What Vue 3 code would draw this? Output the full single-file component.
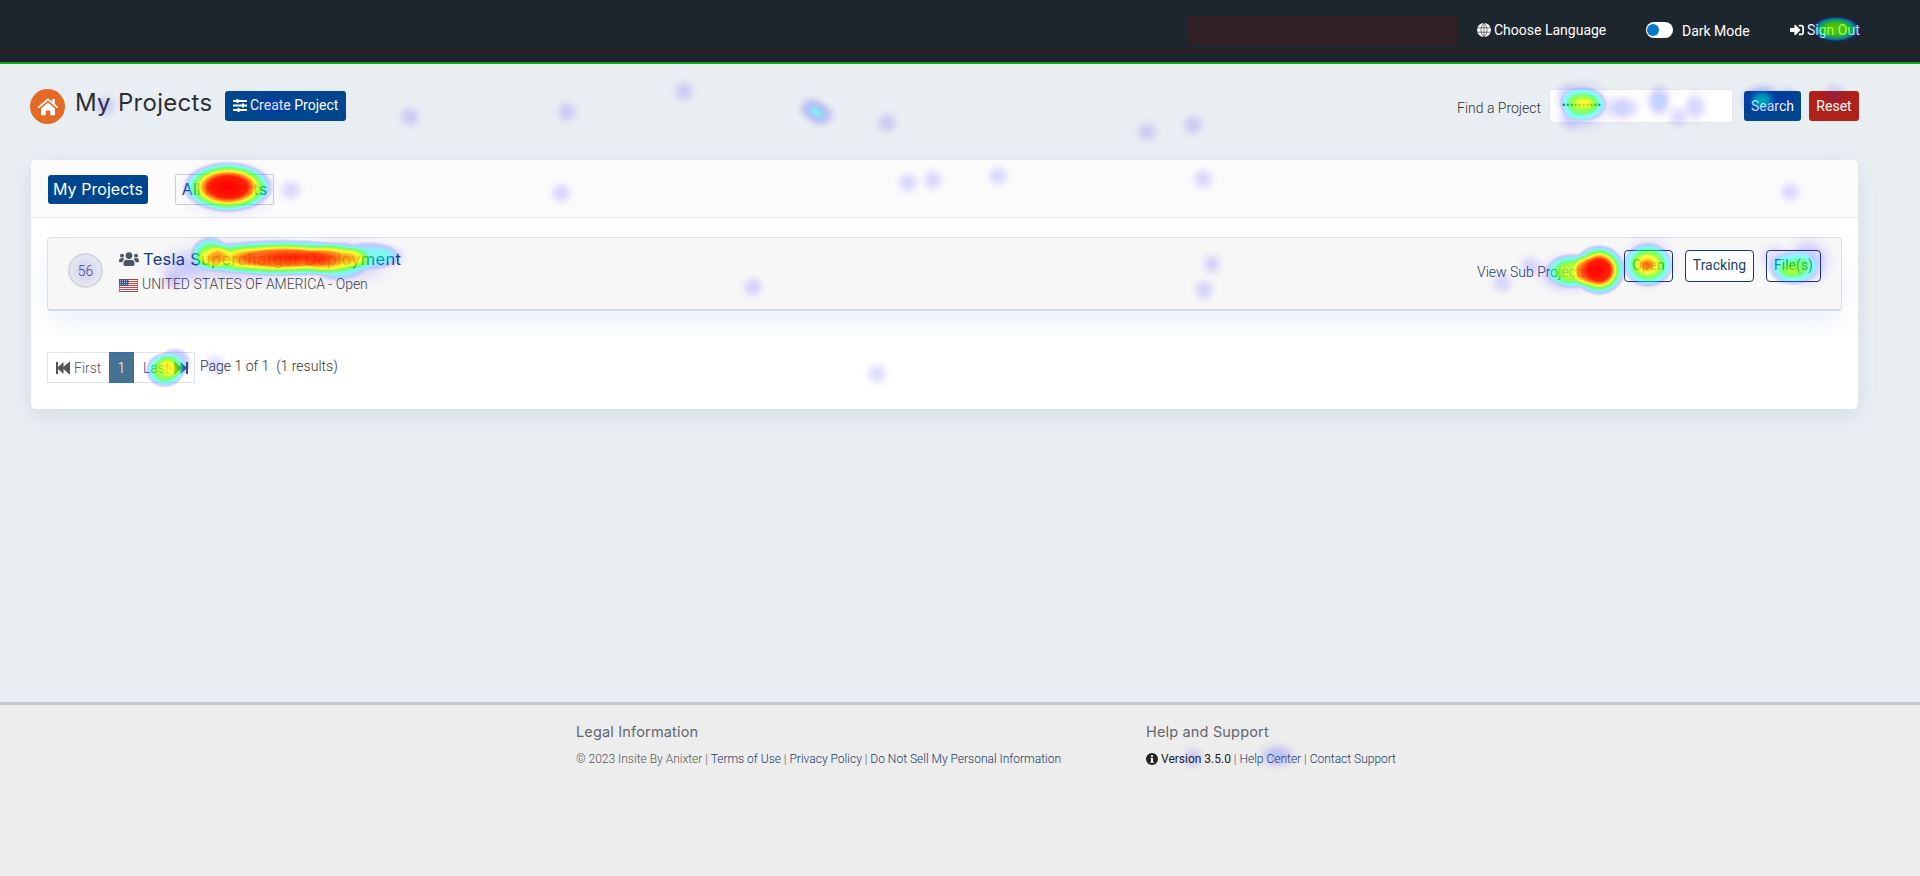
<script setup>
const spots = [
  [410, 117], [567, 112], [684, 91], [887, 123], [1147, 132], [1193, 125],
  [908, 183], [933, 180], [998, 176], [1203, 179], [1790, 192], [291, 190],
  [561, 193], [753, 287], [1212, 264], [1204, 290], [877, 374], [215, 365],
  [105, 106], [173, 280], [1502, 283], [1530, 266], [1193, 758],
  [1678, 117], [1787, 97], [1834, 94], [1567, 94], [1570, 119]
]
const soft = [
  [812, 109, 17, 15, 0.3], [821, 115, 17, 15, 0.3], [1622, 108, 24, 17, 0.22],
  [1659, 101, 16, 20, 0.3], [1695, 107, 16, 20, 0.18], [1762, 100, 24, 19, 0.52],
  [1277, 756, 23, 16, 0.25], [85, 271, 20, 20, 0.1], [273, 106, 24, 16, 0.18],
  [1808, 262, 28, 29, 0.3], [1775, 258, 20, 18, 0.15], [1568, 274, 38, 24, 0.3],
  [1648, 262, 32, 32, 0.2], [238, 262, 90, 30, 0.2], [345, 262, 60, 30, 0.2],
  [228, 190, 56, 34, 0.22], [1583, 106, 32, 30, 0.28], [185, 268, 34, 22, 0.14],
  [388, 256, 22, 14, 0.22]
]
const hot = [
  [228, 187, 46, 26, 1], [284, 258, 92, 19, 0.9], [210, 254, 20, 18, 0.64],
  [228, 258, 34, 17, 0.2], [338, 261, 34, 20, 0.5], [370, 256, 30, 15, 0.38],
  [1599, 270, 27, 26, 1], [1572, 271, 27, 18, 0.66], [1648, 265, 26, 23, 0.72],
  [1793, 268, 26, 18, 0.52], [165, 370, 20, 18, 0.74], [175, 363, 17, 16, 0.34],
  [1836, 29, 26, 14, 0.71], [1583, 104, 25, 18, 0.56]
]
const cores = [
  [1647, 265, 15, 12, 0.6], [1790, 271, 18, 12, 0.42], [1584, 103, 20, 11, 0.42], [294, 257, 54, 10, 0.7]
]
</script>

<template>
  <div class="page">
    <header class="top">
      <div class="nav">
        <span class="block"></span>
        <span class="lang">
          <svg class="globe" viewBox="0 0 16 16"><circle cx="8" cy="8" r="8" fill="#fff" /><path d="M0 5.500h16M0 10.500h16M8 0v16M8 0C3.400 4 3.400 12 8 16M8 0c4.600 4 4.600 12 0 16" fill="none" stroke="#1d262d" stroke-width=".7" /></svg>
          <span>Choose Language</span>
        </span>
        <span class="dark"><i class="switch"></i><span>Dark Mode</span></span>
        <span class="out">
          <svg viewBox="0 0 512 512"><path fill="#fff" d="M416 448h-84c-7 0-12-5-12-12v-40c0-7 5-12 12-12h84c18 0 32-14 32-32V160c0-18-14-32-32-32h-84c-7 0-12-5-12-12V76c0-7 5-12 12-12h84c53 0 96 43 96 96v192c0 53-43 96-96 96zm-47-209L201 71c-15-15-41-4-41 17v96H24c-13 0-24 11-24 24v96c0 13 11 24 24 24h136v96c0 21 26 32 41 17l168-168c9-9 9-25 0-34z" /></svg>
          <span>Sign Out</span>
        </span>
      </div>
      <div class="s1"></div><div class="s2"></div><div class="s3"></div>
    </header>

    <section class="titlebar">
      <span class="home"><svg viewBox="0 0 20 18"><path fill="#fff" d="M10 3.800 3 10v6.500c0 .4.3.7.7.7h4.100v-4.700h4.400v4.700h4.100c.4 0 .7-.3.700-.7V10z" /><path fill="none" stroke="#e36b27" stroke-width="3.400" d="M.9 10.200 10 2.300l9.100 7.900" /><path fill="#fff" d="M14.300 1h2.500v5.500l-2.500-2z" /><path fill="none" stroke="#fff" stroke-width="1.700" stroke-linecap="round" d="M.9 9.200 10 1.300l9.100 7.900" /></svg></span>
      <h1>My Projects</h1>
      <button class="btn create">
        <svg viewBox="0 0 14 13"><path stroke="#fff" stroke-width="2" d="M0 2h14M0 6.500h14M0 11h14" /><path stroke="#fff" stroke-width="2" d="M4.500 0v4M10 4.500v4M5.500 9v4" /></svg>
        <span>Create Project</span>
      </button>
      <div class="find">
        <label>Find a Project</label>
        <div class="input"><span>••••••••••</span></div>
        <button class="btn search">Search</button>
        <button class="btn reset">Reset</button>
      </div>
    </section>

    <main class="card">
      <div class="tabs"><span class="tab on">My Projects</span><span class="tab">All Projects</span></div>
      <div class="body">
        <div class="row">
          <span class="num">56</span>
          <div class="info">
            <div class="name">
              <svg viewBox="0 0 640 460"><g fill="#4b5664"><circle cx="320" cy="112" r="108" /><circle cx="96" cy="115" r="62" /><circle cx="544" cy="115" r="62" /><path d="M144 355c0-65 48-113 110-113 45 20 87 20 132 0 62 0 110 48 110 113v45c0 28-18 46-46 46H190c-28 0-46-18-46-46zM0 285c0-50 29-84 64-84h64c22 0 38 8 49 22-40 27-63 62-67 102H28c-17 0-28-11-28-40zM640 285c0-50-29-84-64-84h-64c-22 0-38 8-49 22 40 27 63 62 67 102h82c17 0 28-11 28-40z" /></g></svg>
              <span>Tesla Supercharger Deployment</span>
            </div>
            <div class="place">
              <svg viewBox="0 0 19 13"><rect width="19" height="13" fill="#fff" /><path stroke="#d53b43" d="M0 .5h19M0 2.500h19M0 4.500h19M0 6.500h19M0 8.500h19M0 10.500h19M0 12.500h19" /><rect width="9.500" height="7" fill="#3b5796" /><path d="M1 1.500h8M1 3.500h8M1 5.500h8" stroke="#c5d0e6" stroke-width=".8" stroke-dasharray="1 1" /><rect x=".5" y=".5" width="18" height="12" fill="none" stroke="#654" stroke-opacity=".5" /></svg>
              <span>UNITED STATES OF AMERICA - Open</span>
            </div>
          </div>
          <div class="actions">
            <span class="sub">View Sub Projects</span>
            <span class="act open">Open</span>
            <span class="act track">Tracking</span>
            <span class="act files">File(s)</span>
          </div>
        </div>
      </div>
      <div class="pager">
        <span class="pg first"><svg viewBox="0 0 14 12"><path fill="#555" d="M0 0h2v5L7.500 0v5L13 0h1v12h-1L7.500 7v5L2 7v5H0z" /></svg><span>First</span></span>
        <span class="pg cur">1</span>
        <span class="pg last"><span>Last</span><svg viewBox="0 0 14 12"><path fill="#3e4c6c" d="M14 0h-2v5L6.500 0v5L1 0H0v12h1l5.500-5v5L12 7v5h2z" /></svg></span>
        <span class="count">Page 1 of 1&nbsp; (1 results)</span>
      </div>
    </main>

    <footer>
      <div class="legal">
        <h2>Legal Information</h2>
        <p>© 2023 Insite By Anixter | <a>Terms of Use</a> | <a>Privacy Policy</a> | <a>Do Not Sell My Personal Information</a></p>
      </div>
      <div class="help">
        <h2>Help and Support</h2>
        <p><svg viewBox="0 0 12 12"><circle cx="6" cy="6" r="6" fill="#222" /><path d="M5 2.200h2v1.700H5zM4.500 5H7v3.500h.8v1.200H4.300V8.500H5V6h-.5z" fill="#fff" /></svg><b>Version 3.5.0</b> | <a>Help Center</a> | <a>Contact Support</a></p>
      </div>
    </footer>

    <svg class="heat" width="1920" height="876" viewBox="0 0 1920 876">
      <defs>
        <radialGradient id="soft">
          <stop offset="0" stop-opacity="1" /><stop offset=".25" stop-opacity=".86" /><stop offset=".5" stop-opacity=".5" /><stop offset=".75" stop-opacity=".15" /><stop offset="1" stop-opacity="0" />
        </radialGradient>
        <radialGradient id="hot">
          <stop offset="0" stop-opacity="1" /><stop offset=".42" stop-opacity=".97" /><stop offset=".6" stop-opacity=".8" /><stop offset=".8" stop-opacity=".5" /><stop offset=".92" stop-opacity=".16" /><stop offset="1" stop-opacity="0" />
        </radialGradient>
        <filter id="map" filterUnits="userSpaceOnUse" x="0" y="0" width="1920" height="876" color-interpolation-filters="sRGB">
          <feColorMatrix in="SourceGraphic" values="0 0 0 1 0  0 0 0 1 0  0 0 0 1 0  0 0 0 0 1" />
          <feComponentTransfer result="tint">
            <feFuncR type="table" tableValues=".1 .1 .1 0 0 0 .1 .4 1 1 1" />
            <feFuncG type="table" tableValues="0 0 .15 .5 .85 1 1 1 1 .4 0" />
            <feFuncB type="table" tableValues="1 1 1 1 1 .9 .3 0 0 0 0" />
          </feComponentTransfer>
          <feComposite in="tint" in2="SourceGraphic" operator="in" />
        </filter>
      </defs>
      <g filter="url(#map)">
        <circle v-for="(s, i) in spots" :key="'p' + i" :cx="s[0]" :cy="s[1]" r="15" fill="url(#soft)" opacity=".15" />
        <ellipse v-for="(s, i) in soft" :key="'s' + i" :cx="s[0]" :cy="s[1]" :rx="s[2]" :ry="s[3]" fill="url(#soft)" :opacity="s[4]" />
        <ellipse v-for="(s, i) in hot" :key="'h' + i" :cx="s[0]" :cy="s[1]" :rx="s[2]" :ry="s[3]" fill="url(#hot)" :opacity="s[4]" />
        <ellipse v-for="(s, i) in cores" :key="'c' + i" :cx="s[0]" :cy="s[1]" :rx="s[2]" :ry="s[3]" fill="url(#soft)" :opacity="s[4]" />
      </g>
    </svg>
  </div>
</template>

<style>
body { margin: 0; overflow: hidden; }
</style>

<style scoped>
* { box-sizing: border-box; }
svg { display: block; flex: none; }
.page { position: relative; width: 1920px; height: 876px; background: #e9eef2; font: 300 14px/20px Roboto, sans-serif; color: #333; display: flex; flex-direction: column; }
.top { height: 64px; background: #1d262d; border-bottom: 2px solid #00a822; flex: none; }
.nav { height: 50px; padding: 10px 61px 0 0; display: flex; justify-content: flex-end; align-items: center; color: #fff; font-weight: 370; white-space: nowrap; }
.nav > span { display: flex; align-items: center; }
.nav .block { width: 270px; height: 29px; background: #301f25; margin-right: 20px; }
.nav .lang { width: 169px; gap: 3px; }
.globe { width: 14px; height: 14px; }
.dark { width: 144px; gap: 9px; }
.dark > span { padding-top: 1px; }
.switch { width: 27px; height: 16px; border-radius: 8px; background: #fff; position: relative; }
.switch::after { content: ""; position: absolute; left: 1px; top: 2px; width: 12px; height: 12px; border-radius: 50%; background: #0878ca; }
.out { width: 69px; gap: 3px; }
.out svg { width: 14px; height: 14px; }
.s1 { height: 4px; background: #301e24; }
.s2 { height: 4px; background: #102b32; }
.s3 { height: 4px; background: #291d28; }
.titlebar { height: 96px; flex: none; padding: 25px 61px 0 30px; display: flex; align-items: flex-start; }
.home { width: 35px; height: 35px; border-radius: 50%; background: #e36b27; display: grid; place-items: center; }
.home svg { width: 20px; height: 18px; }
h1 { font: 380 24px/34px Inter, sans-serif; letter-spacing: .3px; margin: -3px 0 0 10px; width: 150px; color: #2c2f33; white-space: nowrap; }
.btn { border: 0; height: 30px; border-radius: 3px; background: #00468e; color: #fff; font: 450 14px/20px Roboto, sans-serif; padding: 0; margin-top: 2px; white-space: nowrap; }
.create { width: 121px; padding: 0 8px 2px; display: flex; align-items: center; gap: 3px; }
.create svg { width: 14px; height: 13px; }
.find { margin-left: auto; display: flex; align-items: flex-start; }
.find label { width: 92px; padding-top: 9px; color: #333; white-space: nowrap; }
.input { width: 184px; height: 34px; background: #fff; border: 1px solid #e1e6ec; border-radius: 2px; padding: 6px 12px; margin-right: 11px; }
.input span { font-size: 10px; font-weight: 500; letter-spacing: .45px; color: #222; display: block; }
.search { width: 57px; margin-right: 8px; }
.reset { width: 50px; background: #af2219; }
.card { width: 1827px; height: 249px; margin-left: 31px; flex: none; background: #fff; border-radius: 5px; box-shadow: 0 6px 22px rgba(70, 110, 150, .13); }
.tabs { height: 58px; background: #fbfbfb; border-bottom: 1px solid #e9e9e9; border-radius: 5px 5px 0 0; padding: 14px 17px; display: flex; gap: 27px; font: 400 16px/29px Inter, sans-serif; letter-spacing: .05px; }
.tab { width: 99px; height: 31px; border: 1px solid #ccd0d4; border-radius: 2px; color: #234a83; text-align: center; white-space: nowrap; }
.tab.on { width: 100px; height: 29px; margin-top: 1px; border: 0; border-radius: 3px; background: #00468e; color: #fff; }
.body { height: 118px; padding: 19px 16px 0; overflow: hidden; }
.row { height: 74px; background: #f7f7f7; border: 1px solid #dadfe4; border-bottom: 2px solid #d5dbdf; border-radius: 4px; box-shadow: 0 12px 26px rgba(70, 140, 210, .1); display: flex; padding: 0 20px; }
.num { width: 35px; height: 35px; margin-top: 15px; border: 2px solid #d8dade; border-radius: 50%; background: #e9ebef; text-align: center; line-height: 33px; color: #44546c; }
.info { margin-left: 16px; padding-top: 11px; white-space: nowrap; }
.name { display: flex; align-items: center; gap: 4px; height: 20px; font: 380 16.500px/20px Inter, sans-serif; letter-spacing: .27px; color: #173e7c; }
.name svg { width: 20px; height: 14.500px; }
.place { display: flex; align-items: center; gap: 4px; height: 20px; margin-top: 5px; color: #444; letter-spacing: -.03px; }
.place svg { width: 19px; height: 13px; margin-top: 3px; }
.actions { margin-left: auto; display: flex; white-space: nowrap; padding-top: 12px; color: #1b3f70; }
.sub { width: 147px; padding-top: 12px; }
.act { height: 32px; border: 1px solid #17396f; border-radius: 4px; background: #fff; text-align: center; line-height: 29px; font-weight: 400; }
.open { width: 49px; margin-right: 12px; }
.track { width: 69px; margin-right: 12px; }
.files { width: 55px; }
.pager { display: flex; padding: 16px 16px 0; height: 47px; white-space: nowrap; }
.pg { height: 31px; border: 1px solid #dfe2e6; display: flex; align-items: center; gap: 4px; color: #555; }
.pg svg { width: 14px; height: 12px; }
.first { width: 62px; padding-left: 8px; border-right: 0; }
.cur { width: 25px; background: #457391; border-color: #2f6eb5; color: #fff; justify-content: center; }
.last { width: 61px; padding-left: 9px; border-left: 0; color: #355087; }
.count { margin-left: 5px; padding-top: 4px; }
footer { margin-top: 293px; height: 174px; flex: none; background: #ededed; border-top: 3px solid #c4cad0; padding: 18px 0 0 576px; display: flex; }
.legal { width: 570px; }
h2 { font: 400 14.500px/18px Inter, sans-serif; letter-spacing: .17px; margin: 0; color: #62676d; white-space: nowrap; }
p { margin: 9px 0 0; font: 300 12px/18px Roboto, sans-serif; color: #555; white-space: nowrap; }
p a { color: #173c66; }
p b { color: #222; font-weight: 400; }
p svg { display: inline-block; width: 12px; height: 12px; vertical-align: -2px; margin-right: 3px; }
.heat { position: absolute; left: 0; top: 0; pointer-events: none; }
</style>
